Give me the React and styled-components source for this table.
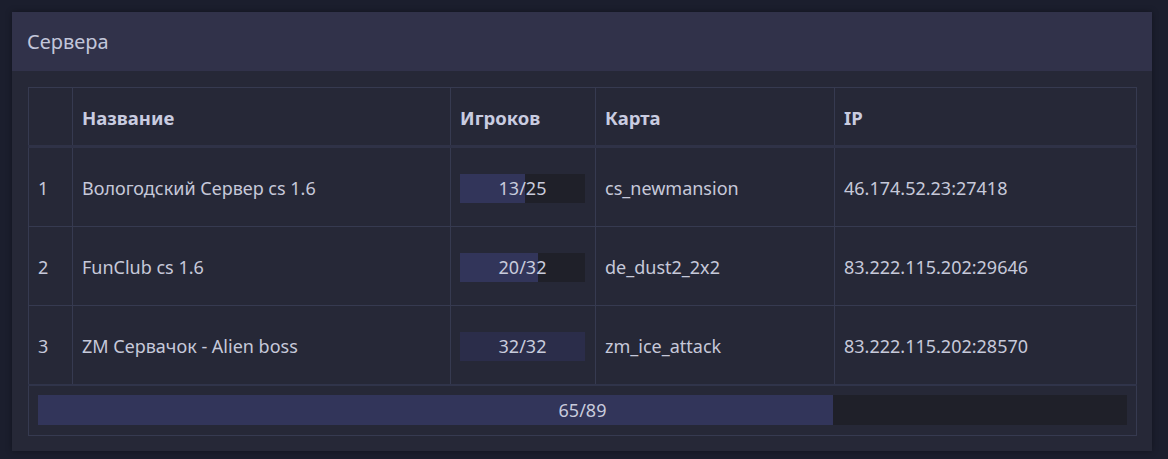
import React from "react";
import styled, { createGlobalStyle } from "styled-components";

const Global = createGlobalStyle`
  html, body { margin: 0; padding: 0; }
  body {
    background: #1b1e2d;
    font-family: "Noto Sans", "Open Sans", sans-serif;
    color: #c6c9da;
  }
`;

const Page = styled.div`
  padding: 12px 16px 10px 12px;
  height: 459px;
  box-sizing: border-box;
`;

const Panel = styled.section`
  background: #262837;
  box-shadow: 0 0 6px rgba(0, 0, 0, 0.35);
`;

const PanelHeader = styled.header`
  height: 59px;
  background: #31324a;
  display: flex;
  align-items: center;
  padding-left: 15px;
  font-size: 20px;
  color: #c2c6da;
`;

const PanelBody = styled.div`
  padding: 16px 15px 15px 16px;
`;

const Table = styled.table`
  width: 100%;
  border-collapse: collapse;
  border: 1px solid #363a50;
  table-layout: fixed;
  font-size: 18px;
`;

const Th = styled.th`
  text-align: left;
  font-weight: 700;
  font-size: 18.5px;
  color: #c9cce0;
  height: 55px;
  padding: 2px 10px 0 9px;
  border-left: 1px solid #363a50;
  border-bottom: 3px solid #2f3247;
  width: ${(p) => p.$w || "auto"};
`;

const Td = styled.td`
  height: 76px;
  padding: 2px 10px 0 9px;
  border-left: 1px solid #363a50;
  border-top: 1px solid #363a50;
  color: #c6c9da;
  white-space: nowrap;
`;

const FootTd = styled.td`
  border-top: 2px solid #30344a;
  padding: 9px 9px 10px;
`;

const Bar = styled.div`
  position: relative;
  height: ${(p) => p.$h}px;
  width: ${(p) => (p.$w ? p.$w + "px" : "100%")};
  background: #1f2029;
  display: flex;
  align-items: center;
  justify-content: center;
`;

const Fill = styled.div`
  position: absolute;
  left: 0;
  top: 0;
  bottom: 0;
  background: ${(p) => (p.$full ? "#2b2d4a" : "#32355a")};
`;

const BarText = styled.span`
  position: relative;
  color: #c8cbdc;
  font-size: 18px;
`;

function Progress({ cur, max, w, h }) {
  return (
    <Bar $w={w} $h={h}>
      <Fill $full={cur >= max} style={{ width: `${(cur / max) * 100}%` }} />
      <BarText>
        {cur}/{max}
      </BarText>
    </Bar>
  );
}

const servers = [
  ["Вологодский Сервер cs 1.6", 13, 25, "cs_newmansion", "46.174.52.23:27418"],
  ["FunClub cs 1.6", 20, 32, "de_dust2_2x2", "83.222.115.202:29646"],
  ["ZM Сервачок - Alien boss", 32, 32, "zm_ice_attack", "83.222.115.202:28570"],
];

export default function App() {
  return (
    <Page>
      <Global />
      <Panel>
        <PanelHeader>Сервера</PanelHeader>
        <PanelBody>
          <Table>
            <thead>
              <tr>
                <Th $w="24px"></Th>
                <Th $w="358px">Название</Th>
                <Th $w="125px">Игроков</Th>
                <Th $w="219px">Карта</Th>
                <Th>IP</Th>
              </tr>
            </thead>
            <tbody>
              {servers.map((s, i) => (
                <tr key={i}>
                  <Td>{i + 1}</Td>
                  <Td>{s[0]}</Td>
                  <Td>
                    <Progress cur={s[1]} max={s[2]} w={125} h={29} />
                  </Td>
                  <Td>{s[3]}</Td>
                  <Td>{s[4]}</Td>
                </tr>
              ))}
            </tbody>
            <tfoot>
              <tr>
                <FootTd colSpan={5}>
                  <Progress cur={65} max={89} h={30} />
                </FootTd>
              </tr>
            </tfoot>
          </Table>
        </PanelBody>
      </Panel>
    </Page>
  );
}
